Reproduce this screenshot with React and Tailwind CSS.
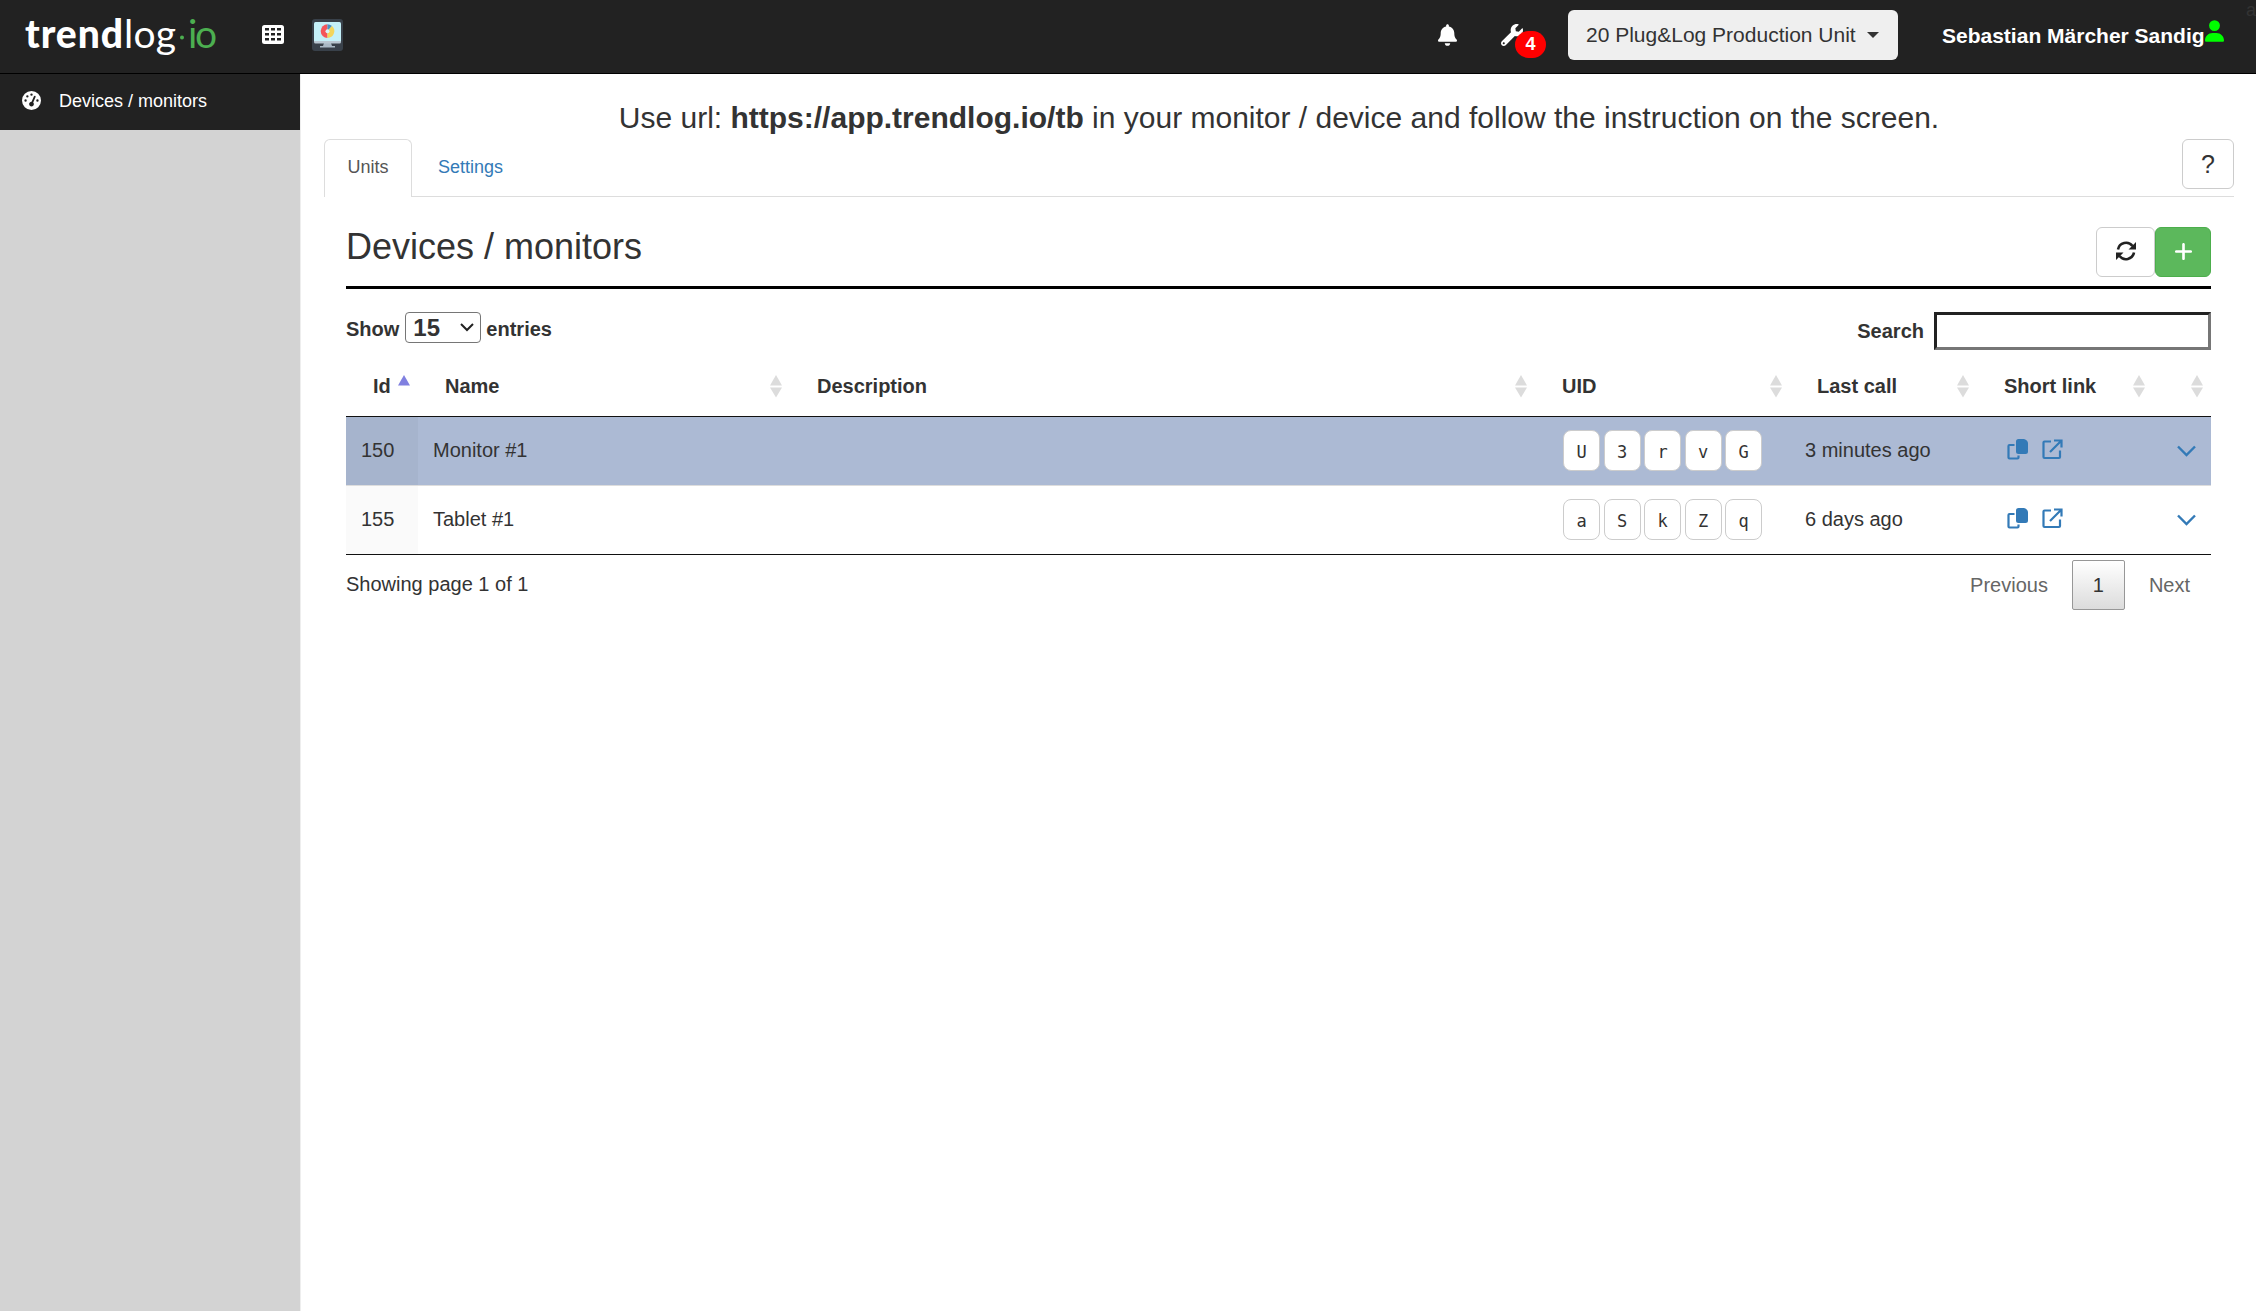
import React from "react";
import { FaBell, FaWrench } from "react-icons/fa";
import { FaUser, FaPlus, FaGaugeHigh } from "react-icons/fa6";

const columns = [
    { label: "Id", sort: "asc" },
    { label: "Name" },
    { label: "Description" },
    { label: "UID" },
    { label: "Last call" },
    { label: "Short link" },
    { label: "" },
];

const devices = [
    { id: 150, name: "Monitor #1", uid: "U3rvG", lastCall: "3 minutes ago", selected: true },
    { id: 155, name: "Tablet #1", uid: "aSkZq", lastCall: "6 days ago", selected: false },
];

const gridCols = "grid grid-cols-[72px_372px_745px_255px_187px_176px_58px]";

const Logo = () => (
    <svg width="200" height="60" viewBox="0 0 200 60" fontFamily="Lato, sans-serif" fontSize="39">
        <text x="1" y="42" fill="#fff" fontWeight="900" textLength="98">trend</text>
        <text x="100" y="42" fill="#fff" fontWeight="400" textLength="52">log</text>
        <circle cx="158" cy="31.500" r="2" fill="#4caf50" />
        <text x="164" y="42" fill="#4caf50" fontWeight="400" textLength="29">io</text>
    </svg>
);

const GridIcon = () => (
    <svg width="22" height="19" viewBox="0 0 22 19">
        <rect width="22" height="19" rx="2.500" fill="#fff" />
        <g fill="#222">
            <rect x="3" y="3" width="4" height="2.500" />
            <rect x="9" y="3" width="4" height="2.500" />
            <rect x="15" y="3" width="4" height="2.500" />
            <rect x="3" y="8" width="4" height="2.500" />
            <rect x="9" y="8" width="4" height="2.500" />
            <rect x="15" y="8" width="4" height="2.500" />
            <rect x="3" y="13" width="4" height="2.500" />
            <rect x="9" y="13" width="4" height="2.500" />
            <rect x="15" y="13" width="4" height="2.500" />
        </g>
    </svg>
);

const MonitorBadge = () => (
    <svg width="31" height="32" viewBox="0 0 31 32">
        <rect width="31" height="32" rx="3" fill="#39414a" />
        <path d="M12 24h7l1 3h3v1.500H8V27h3z" fill="#a9b8c4" />
        <path d="M2 21h27v2a1.500 1.500 0 0 1-1.500 1.500h-24A1.500 1.500 0 0 1 2 23z" fill="#b9c6d0" />
        <path d="M3.500 3h24A1.500 1.500 0 0 1 29 4.500V22H2V4.500A1.500 1.500 0 0 1 3.500 3z" fill="#c4f0f8" />
        <path d="M15.500 5.300a6.800 6.800 0 1 0 0 13.600z" fill="#f4555a" />
        <path d="M15.500 5.300a6.800 6.800 0 0 1 4.500 1.700L15.500 12z" fill="#4b8fc0" />
        <path d="M20 7A6.800 6.800 0 0 1 15.500 18.900V12z" fill="#f3d55b" />
        <circle cx="15.500" cy="12.200" r="2" fill="#d8f4fa" />
    </svg>
);

const RefreshIcon = () => (
    <svg width="20" height="20" viewBox="0 0 20 20">
        <path d="M2 8.500A8.200 8.200 0 0 1 16.500 5M18 11.500A8.200 8.200 0 0 1 3.500 15" fill="none" stroke="#222" strokeWidth="2.600" />
        <path d="M20 1v7.500h-7.500zM0 19v-7.500h7.500z" fill="#222" />
    </svg>
);

const SortIcon = ({ sort }) => (
    <svg width="14" height="24" viewBox="0 0 14 24">
        <path d="M7 1l6 10.500H1z" fill={sort ? "#8080e0" : "#dcdcdc"} />
        {!sort && <path d="M7 23.500l6-10H1z" fill="#dcdcdc" />}
    </svg>
);

const CopyIcon = () => (
    <svg width="21" height="21" viewBox="0 0 21 21">
        <path
            d="M7.500 6H2.500a1 1 0 0 0-1 1v11.500a1 1 0 0 0 1 1h8a1 1 0 0 0 1-1V16.500"
            fill="none"
            stroke="#337ab7"
            strokeWidth="2.200"
        />
        <path d="M11.500 0H17q4 1 4 4.500V12.500a2.500 2.500 0 0 1-2.500 2.500h-7A2.500 2.500 0 0 1 9 12.500v-10A2.500 2.500 0 0 1 11.500 0z" fill="#337ab7" />
    </svg>
);

const OpenIcon = () => (
    <svg width="21" height="21" viewBox="0 0 21 21" fill="none" stroke="#337ab7" strokeWidth="2.200">
        <path d="M9 2.500H2.500a1 1 0 0 0-1 1V18a1 1 0 0 0 1 1H17a1 1 0 0 0 1-1v-6.500" />
        <path d="M12 1.500h7.500v7M19 2L8 13" />
    </svg>
);

const App = () => {
    return (
        <div className="h-[1311px] flex flex-col bg-white text-[#333] font-['Liberation_Sans',Arial,sans-serif] text-[20px] leading-7 overflow-hidden">
            {/* Top bar */}
            <header className="h-[74px] shrink-0 bg-[#222] border-b border-black flex items-start text-white">
                <div className="ml-[24px] mt-[6px] w-[200px]">
                    <Logo />
                </div>
                <div className="ml-[38px] mt-[25px]">
                    <GridIcon />
                </div>
                <div className="ml-[28px] mt-[19px]">
                    <MonitorBadge />
                </div>
                <FaBell className="ml-[1095px] mt-[24px] w-[19px] h-[22px]" />
                <div className="relative ml-[44px] mt-[24px] w-[67px]">
                    <FaWrench className="size-[22px]" />
                    <span className="absolute left-[14px] top-[7px] w-[31px] h-[27px] rounded-full bg-[red] text-[18px] leading-[27px] font-bold text-center">
                        4
                    </span>
                </div>
                <button className="mt-[10px] w-[330px] h-[50px] rounded-md bg-[#efefef] text-[#333] text-[21px] flex items-center pl-[18px]">
                    20 Plug&amp;Log Production Unit
                    <span className="ml-[11px] border-x-[6px] border-x-transparent border-t-[6px] border-t-[#333]"></span>
                </button>
                <span className="ml-[44px] mt-[22px] w-[263px] text-[21px] font-bold whitespace-nowrap">
                    Sebastian Märcher Sandig
                </span>
                <FaUser className="mt-[20px] w-[19px] h-[22px] text-[#0f0]" />
                <span className="ml-[22px] -mt-[4px] text-[18px] text-[#333]">a</span>
            </header>

            <div className="flex flex-1">
                {/* Sidebar */}
                <aside className="w-[300px] bg-[#d3d3d3]">
                    <a className="h-[56px] bg-[#222] text-white text-[18px] flex items-center pl-[22px] pb-[3px]">
                        <FaGaugeHigh className="size-[19px] mr-[18px]" />
                        Devices / monitors
                    </a>
                </aside>

                <main className="flex-1 border-l border-[#eee] pl-[23px] pr-[22px]">
                    <p className="mt-[23px] h-[42px] text-[30px] leading-[42px] text-center">
                        Use url: <b>https://app.trendlog.io/tb</b> in your monitor / device and follow the
                        instruction on the screen.
                    </p>

                    {/* Tabs */}
                    <div className="flex justify-between h-[58px] border-b border-[#ddd] text-[18px]">
                        <div className="flex">
                            <div className="w-[88px] h-[58px] bg-white border border-b-0 border-[#ddd] rounded-t-md text-[#555] leading-[54px] text-center">
                                Units
                            </div>
                            <div className="pl-[26px] leading-[56px] text-[#337ab7]">Settings</div>
                        </div>
                        <button className="w-[52px] h-[50px] border border-[#ccc] rounded-md text-[25px]">?</button>
                    </div>

                    <div className="pl-[22px] pr-[23px]">
                        <div className="flex justify-between h-[92px] border-b-[3px] border-black">
                            <h1 className="mt-[28px] text-[36px] leading-[44px]">Devices / monitors</h1>
                            <div className="flex mt-[30px]">
                                <button className="w-[59px] h-[50px] border border-[#ccc] rounded-md flex items-center justify-center pb-[2px]">
                                    <RefreshIcon />
                                </button>
                                <button className="w-[56px] h-[50px] bg-[#5cb85c] border border-[#4cae4c] rounded-md text-white flex items-center justify-center pb-[2px]">
                                    <FaPlus className="size-[21px]" />
                                </button>
                            </div>
                        </div>

                        {/* Table controls */}
                        <div className="flex justify-between mt-[23px] h-[38px] font-bold">
                            <div className="flex items-start">
                                <span className="mt-[3px]">Show</span>
                                <div className="ml-[6px] w-[76px] h-[31px] border border-[#767676] rounded flex items-center justify-between pl-[7px] pr-[6px] text-[24px]">
                                    15
                                    <svg width="14" height="9" viewBox="0 0 14 9" fill="none" stroke="#222" strokeWidth="2">
                                        <path d="M1 1l6 6 6-6" />
                                    </svg>
                                </div>
                                <span className="ml-[5px] mt-[3px]">entries</span>
                            </div>
                            <label className="flex items-center">
                                Search
                                <span className="ml-[10px] w-[277px] h-[38px] border-[3px] border-t-[#222] border-l-[#222] border-b-[#767676] border-r-[#767676]"></span>
                            </label>
                        </div>

                        {/* Table */}
                        <div className={`${gridCols} h-[67px] border-b border-[#111] font-bold`}>
                            {columns.map((col, index) => (
                                <div key={index} className="flex items-start justify-between pl-[27px] pr-[7px] pt-[22px]">
                                    <span>{col.label}</span>
                                    <div className="pt-[2px]">
                                        <SortIcon sort={col.sort} />
                                    </div>
                                </div>
                            ))}
                        </div>
                        {devices.map((device) => (
                            <div
                                key={device.id}
                                className={`${gridCols} ${
                                    device.selected
                                        ? "h-[69px] bg-[#acbad4] border-b border-[#ddd]"
                                        : "h-[69px] border-b border-[#111]"
                                } leading-[66px]`}
                            >
                                <div className={`pl-[15px] ${device.selected ? "bg-[#a6b4cd]" : "bg-[#fafafa]"}`}>
                                    {device.id}
                                </div>
                                <div className="pl-[15px]">{device.name}</div>
                                <div></div>
                                <div className="flex gap-[3.500px] pl-[28px] pt-[13px]">
                                    {device.uid.split("").map((char, index) => (
                                        <kbd
                                            key={index}
                                            className="w-[37px] h-[41px] bg-white border border-[#ccc] rounded-lg text-center text-[17px] leading-[42px] font-['DejaVu_Sans_Mono',monospace]"
                                        >
                                            {char}
                                        </kbd>
                                    ))}
                                </div>
                                <div className="pl-[15px]">{device.lastCall}</div>
                                <div className="flex gap-[14px] pl-[30px] pt-[22px]">
                                    <CopyIcon />
                                    <OpenIcon />
                                </div>
                                <div className="pl-[24px] pt-[28px]">
                                    <svg width="19" height="12" viewBox="0 0 19 12" fill="none" stroke="#337ab7" strokeWidth="2.400">
                                        <path d="M1 1.500l8.500 8.500L18 1.500" />
                                    </svg>
                                </div>
                            </div>
                        ))}

                        {/* Footer */}
                        <div className="flex justify-between">
                            <span className="mt-[15px]">Showing page 1 of 1</span>
                            <div className="flex mt-[5px] h-[50px] leading-[50px] text-[#666]">
                                <span className="mr-[24px]">Previous</span>
                                <span className="w-[53px] h-[50px] leading-[48px] border border-[#979797] rounded-xs bg-linear-to-b from-white to-[#dcdcdc] text-[#333] text-center">
                                    1
                                </span>
                                <span className="ml-[24px] mr-[21px]">Next</span>
                            </div>
                        </div>
                    </div>
                </main>
            </div>
        </div>
    );
};

export default App;
